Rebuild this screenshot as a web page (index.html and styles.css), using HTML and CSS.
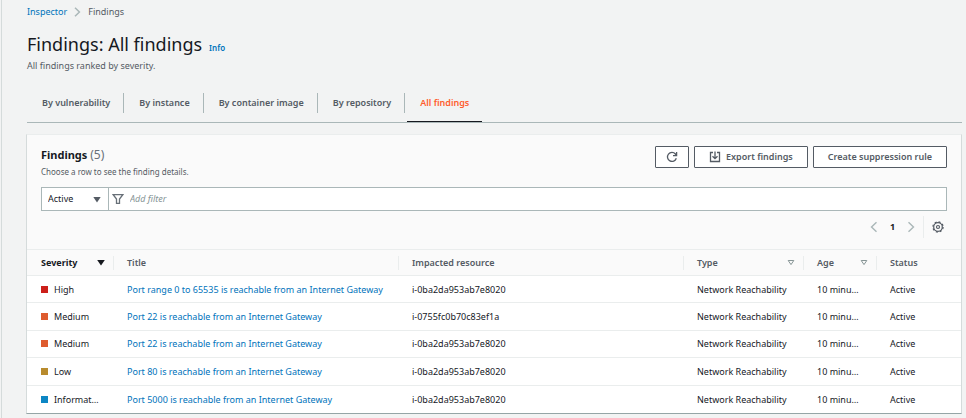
FILE: index.html
```html
<!DOCTYPE html>
<html lang="en">
<head>
<meta charset="utf-8">
<title>Findings: All findings</title>
<link rel="stylesheet" href="styles.css">
</head>
<body>
<main class="page">
  <nav class="breadcrumb" aria-label="Breadcrumb">
    <a href="#">Inspector</a>
    <svg class="crumb-arrow" viewBox="0 0 7 10" aria-hidden="true"><path d="M1 .8 5.4 5 1 9.2"/></svg>
    <span>Findings</span>
  </nav>

  <header class="page-header">
    <h1>Findings: All findings</h1>
    <a class="info" href="#">Info</a>
  </header>
  <p class="subtitle">All findings ranked by severity.</p>

  <nav class="tabs" aria-label="Finding views">
    <a class="tab" href="#">By vulnerability</a>
    <a class="tab" href="#">By instance</a>
    <a class="tab" href="#">By container image</a>
    <a class="tab" href="#">By repository</a>
    <a class="tab tab-active" href="#" aria-current="page">All findings</a>
  </nav>

  <section class="card">
    <div class="card-top">
      <div class="card-heading">
        <div class="card-title">
          <h2>Findings <span class="count">(5)</span></h2>
          <p>Choose a row to see the finding details.</p>
        </div>
        <div class="actions">
          <button class="btn btn-icon" type="button" aria-label="Refresh">
            <svg class="icon" viewBox="0 0 12 12"><path d="M10.3 7.2A4.5 4.5 0 1 1 9.4 3L10.4 4.4M10.6 1v3.6H7"/></svg>
          </button>
          <button class="btn" type="button">
            <svg class="icon" viewBox="0 0 12 12" aria-hidden="true"><path d="M4 1.5H1.5v9h9v-9H8M6 .5v7M3.5 5.2 6 7.7l2.5-2.5"/></svg>
            Export findings
          </button>
          <button class="btn" type="button">Create suppression rule</button>
        </div>
      </div>

      <div class="filter">
        <div class="status">
          <select aria-label="Finding status"><option>Active</option></select>
          <svg class="caret" viewBox="0 0 8 7" aria-hidden="true"><path d="M.3 1h7.4L4 6.6z"/></svg>
        </div>
        <label class="search">
          <svg class="icon funnel" viewBox="0 0 12 12" aria-hidden="true"><path d="M1.2 1.7h9.6L7.5 6v4.3h-3V6z"/></svg>
          <input type="text" placeholder="Add filter" aria-label="Add filter">
        </label>
      </div>

      <div class="tools">
        <button class="bare" type="button" aria-label="Previous page"><svg class="page-arrow" viewBox="0 0 8 12"><path d="M6.5 1.2 1.5 6l5 4.8"/></svg></button>
        <button class="bare page-number" type="button">1</button>
        <button class="bare" type="button" aria-label="Next page"><svg class="page-arrow" viewBox="0 0 8 12"><path d="M1.5 1.2 6.5 6l-5 4.8"/></svg></button>
        <button class="bare settings" type="button" aria-label="Preferences">
          <svg class="gear" viewBox="0 0 12 12"><circle class="teeth" cx="6" cy="6" r="5.1"/><circle cx="6" cy="6" r="4.3"/><circle cx="6" cy="6" r="1.5"/></svg>
        </button>
      </div>
    </div>

    <table class="findings">
      <colgroup><col class="c-severity"><col><col><col class="c-type"><col class="c-age"><col class="c-status"></colgroup>
      <thead>
        <tr>
          <th scope="col" class="sorted"><div class="head"><span>Severity</span><svg class="caret" viewBox="0 0 8 7" aria-hidden="true"><path d="M.2 1h7.6L4 6.6z"/></svg></div></th>
          <th scope="col"><div class="head">Title</div></th>
          <th scope="col"><div class="head">Impacted resource</div></th>
          <th scope="col"><div class="head"><span>Type</span><svg class="caret hollow" viewBox="0 0 8 7" aria-hidden="true"><path d="M1.2 1.5h5.6L4 5.6z"/></svg></div></th>
          <th scope="col"><div class="head"><span>Age</span><svg class="caret hollow" viewBox="0 0 8 7" aria-hidden="true"><path d="M1.2 1.5h5.6L4 5.6z"/></svg></div></th>
          <th scope="col"><div class="head">Status</div></th>
        </tr>
      </thead>
      <tbody>
        <tr><td><span class="severity high">High</span></td><td><a href="#">Port range 0 to 65535 is reachable from an Internet Gateway</a></td><td>i-0ba2da953ab7e8020</td><td>Network Reachability</td><td>10 minu…</td><td>Active</td></tr>
        <tr><td><span class="severity medium">Medium</span></td><td><a href="#">Port 22 is reachable from an Internet Gateway</a></td><td>i-0755fc0b70c83ef1a</td><td>Network Reachability</td><td>10 minu…</td><td>Active</td></tr>
        <tr><td><span class="severity medium">Medium</span></td><td><a href="#">Port 22 is reachable from an Internet Gateway</a></td><td>i-0ba2da953ab7e8020</td><td>Network Reachability</td><td>10 minu…</td><td>Active</td></tr>
        <tr><td><span class="severity low">Low</span></td><td><a href="#">Port 80 is reachable from an Internet Gateway</a></td><td>i-0ba2da953ab7e8020</td><td>Network Reachability</td><td>10 minu…</td><td>Active</td></tr>
        <tr><td><span class="severity info-level">Informat…</span></td><td><a href="#">Port 5000 is reachable from an Internet Gateway</a></td><td>i-0ba2da953ab7e8020</td><td>Network Reachability</td><td>10 minu…</td><td>Active</td></tr>
      </tbody>
    </table>
  </section>
</main>
</body>
</html>
```
FILE: styles.css
```css
* { box-sizing: border-box; }

body {
  margin: 0;
  background: #f2f3f3;
  color: #16191f;
  font: 9px/12px "Noto Sans", "Open Sans", sans-serif;
}

a { color: #0073bb; text-decoration: none; }
h1, h2, p { margin: 0; }
button, input, select { font: inherit; color: inherit; }
svg { flex: none; fill: none; stroke: currentColor; }

.page {
  min-height: 100vh;
  margin-left: 1px;
  padding: 6px 4px 4px 24px;
  border-left: 1px solid #d5dbdb;
}

.breadcrumb {
  display: flex;
  align-items: center;
  gap: 7px;
  padding-left: 1px;
  color: #545b64;
}
.crumb-arrow { width: 7px; height: 10px; stroke: #aab7b8; stroke-width: 1.5; }

.page-header {
  display: flex;
  align-items: baseline;
  gap: 7px;
  margin-top: 13px;
  padding-left: 1px;
}
h1 { font-size: 18px; line-height: 26px; font-weight: 400; }
.info { font-size: 8px; font-weight: 600; }
.subtitle { margin-top: 3px; padding-left: 1px; color: #545b64; }

.tabs {
  display: flex;
  margin: 17px 0 11px 1px;
  border-bottom: 1px solid #aab7b8;
}
.tab {
  display: flex;
  padding: 4px 0 9px 15px;
  color: #545b64;
  font-weight: 600;
  line-height: 20px;
}
.tab:not(.tab-active)::after {
  content: "";
  height: 20px;
  margin-left: 13px;
  border-right: 1px solid #aab7b8;
}
.tab-active {
  margin-left: 2px;
  padding: 4px 13px 8px;
  color: #ff5d2e;
  border-bottom: 1px solid #16191f;
}

.card {
  background: #fff;
  border: 1px solid #d5dbdb;
  border-top-color: #eaeded;
  border-bottom-color: #95a5a6;
}
.card-top { padding: 11px 14px; background: #fafafa; }
.card-heading { display: flex; justify-content: space-between; align-items: flex-start; }
.card-title { padding-top: 1px; }
h2 { font-size: 11px; line-height: 16px; font-weight: 700; }
.count { font-size: 12px; color: #687078; font-weight: 400; }
.card-title p { margin-top: 3px; font-size: 8px; color: #545b64; }

.actions { display: flex; gap: 5px; }
.btn {
  display: flex;
  align-items: center;
  gap: 5px;
  height: 22px;
  padding: 0 14px;
  background: #fff;
  border: 1px solid #545b64;
  border-radius: 1px;
  color: #545b64;
  font-weight: 600;
}
.btn-icon { padding: 0 10px; }
.icon { width: 12px; height: 12px; stroke-width: 1.3; }

.filter {
  display: flex;
  height: 24px;
  margin-top: 9px;
  background: #fff;
  border: 1px solid #aab7b8;
}
.status {
  display: flex;
  align-items: center;
  width: 67px;
  padding-right: 7px;
  border-right: 1px solid #aab7b8;
}
.status select {
  flex: 1;
  min-width: 0;
  height: 100%;
  padding: 0 0 0 6px;
  border: 0;
  background: none;
  appearance: none;
}
.caret { width: 8px; height: 7px; fill: currentColor; stroke: none; }
.status .caret { color: #545b64; }
.search { display: flex; flex: 1; align-items: center; gap: 6px; padding-left: 3px; color: #687078; }
.search input { flex: 1; min-width: 0; padding: 0; border: 0; background: none; outline: 0; color: #16191f; }
.search input::placeholder { color: #879596; font-style: italic; opacity: 1; }
.funnel { stroke: #687078; }

.tools { display: flex; justify-content: flex-end; align-items: center; margin-top: 5px; height: 22px; }
.bare { display: flex; align-items: center; justify-content: center; height: 22px; padding: 0; border: 0; background: none; }
.page-arrow { width: 8px; height: 12px; stroke: #aab7b8; stroke-width: 1.4; }
.page-number { width: 29px; font-weight: 700; }
.settings { margin-left: 8px; padding: 0 3px 0 8px; border-left: 1px solid #eaeded; color: #545b64; }
.gear { width: 12px; height: 12px; stroke-width: 1.2; }
.teeth { stroke-width: 1.2; stroke-dasharray: 2 2; }

.findings { width: 100%; height: 164px; table-layout: fixed; border-spacing: 0; }
.c-severity { width: 87px; }
.c-type { width: 120px; }
.c-age { width: 73px; }
.c-status { width: 84px; }
th { height: 27px; padding: 0; background: #fafafa; border: solid #eaeded; border-width: 1px 0; color: #545b64; text-align: left; font-weight: 600; }
.head {
  display: flex;
  justify-content: space-between;
  align-items: center;
  height: 14px;
  padding: 0 8px 0 13px;
  border-right: 1px solid #eaeded;
}
th:first-child .head { padding-left: 14px; }
th:last-child .head { border-right: 0; }
.sorted { color: #16191f; font-weight: 700; }
.caret.hollow { fill: none; stroke: #879596; }
td {
  height: 27px;
  padding: 1px 0 0 13px;
  border-bottom: 1px solid #eaeded;
  white-space: nowrap;
}
td:first-child { padding-left: 14px; }
tr:last-child td { border-bottom: 0; }
.severity::before { content: ""; display: inline-block; width: 7px; height: 7px; margin-right: 6px; }
.high::before { background: #cc1f1a; }
.medium::before { background: #de5b2e; }
.low::before { background: #b88b2d; }
.info-level::before { background: #0c86c4; }
```
